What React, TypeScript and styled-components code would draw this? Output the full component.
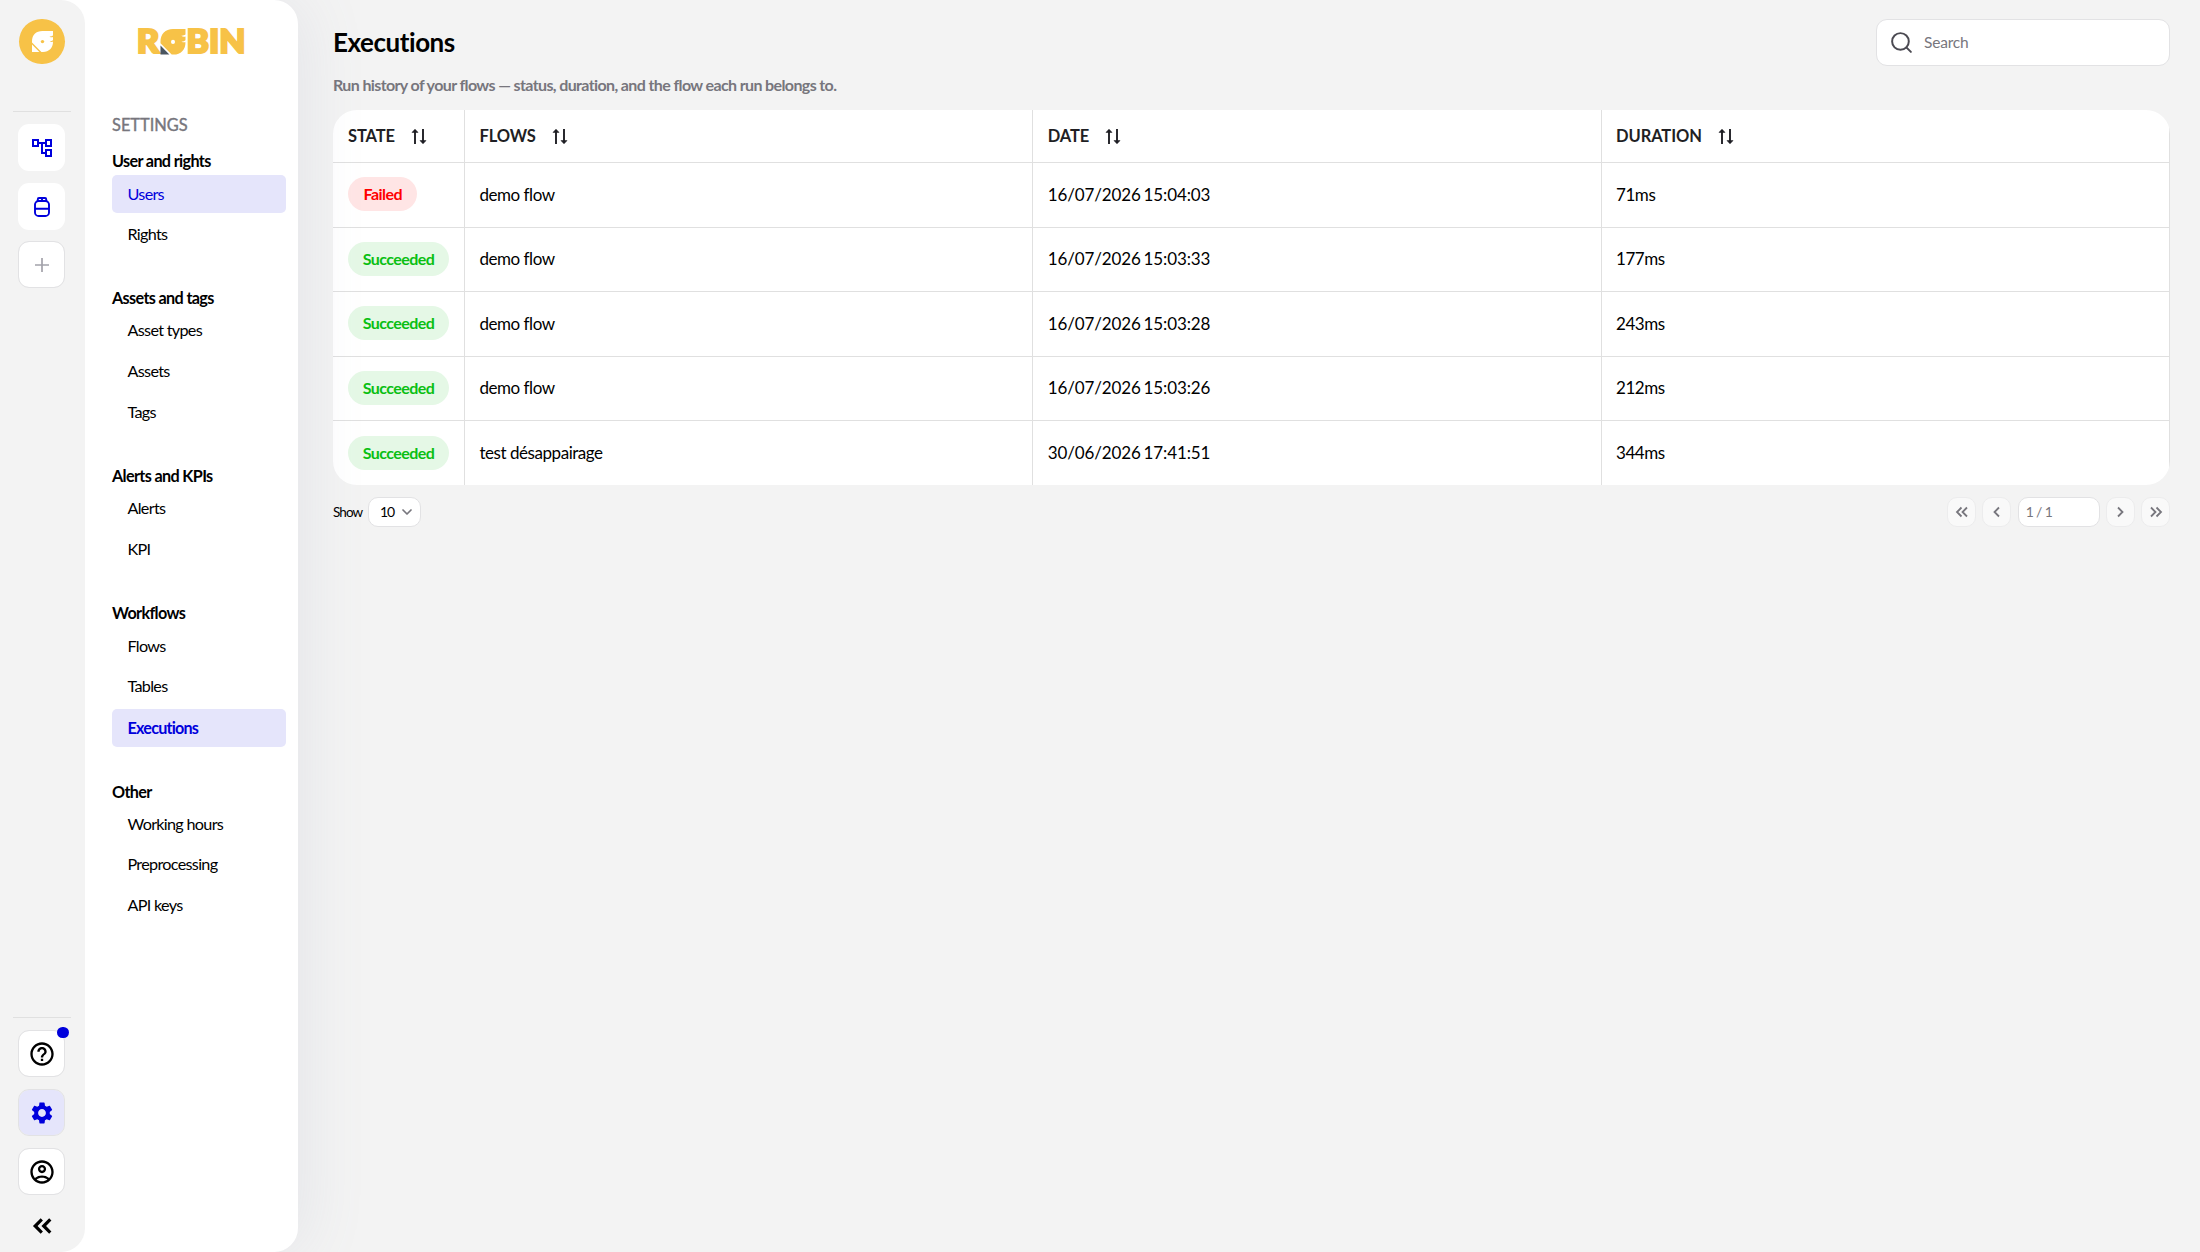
import * as React from 'react';
import styled, { createGlobalStyle } from 'styled-components';
import {
  MdOutlineAccountTree,
  MdHelpOutline,
  MdSettings,
  MdOutlineAccountCircle,
} from 'react-icons/md';
import { Search, ChevronDown } from 'lucide-react';

const GlobalStyle = createGlobalStyle`
  * {
    box-sizing: border-box;
  }
  body {
    margin: 0;
    background: #f3f3f3;
    color: #000;
    font-family: Lato, "Liberation Sans", sans-serif;
  }
  button, input {
    font-family: inherit;
  }
`;

const Page = styled.div`
  display: flex;
  height: 1252px;
  overflow: hidden;
`;

const SideArea = styled.div`
  display: flex;
  flex: 0 0 298px;
  background: #fff;
  border-radius: 0 24px 24px 0;
  box-shadow: 6px 0 64px rgba(120, 132, 165, 0.12);
  z-index: 2;
`;

const Rail = styled.div`
  display: flex;
  flex-direction: column;
  align-items: center;
  flex: 0 0 85px;
  padding: 19px 2px 18px 0;
  background: #f3f3f3;
  border-radius: 0 24px 24px 0;
`;

const Avatar = styled.div`
  display: flex;
  align-items: center;
  justify-content: center;
  flex: 0 0 45px;
  width: 46px;
  margin-left: 1px;
  border-radius: 23px;
  background: #f7c247;
`;

const RailDivider = styled.div`
  flex: 0 0 1px;
  width: 58px;
  margin-left: 1px;
  background: #e0e0e0;
`;

const RailGroup = styled.div`
  display: flex;
  flex-direction: column;
  gap: 12px;
  margin-top: 12px;
`;

const RailButton = styled.button<{ $active?: boolean; $outlined?: boolean; $color?: string }>`
  position: relative;
  display: flex;
  align-items: center;
  justify-content: center;
  width: 47px;
  height: 47px;
  padding: 0;
  border: 1px solid ${p => (p.$outlined ? '#e2e2e4' : 'transparent')};
  border-radius: 11px;
  background: ${p => (p.$active ? '#e5e5fb' : '#fff')};
  background-clip: ${p => (p.$outlined ? 'padding-box' : 'border-box')};
  color: ${p => p.$color || '#000'};
`;

const Dot = styled.span`
  position: absolute;
  top: -4px;
  right: -5px;
  width: 12px;
  height: 11px;
  border-radius: 6px;
  background: #0000dc;
`;

const Spacer = styled.div`
  flex-grow: 1;
`;

const CollapseButton = styled.button`
  display: flex;
  margin-top: 23px;
  padding: 0;
  border: 0;
  background: none;
`;

const Nav = styled.nav`
  display: flex;
  flex-direction: column;
  flex-grow: 1;
  padding: 19px 12px 0 27px;
`;

const Brand = styled.div`
  display: flex;
  padding-left: 22px;
  margin-bottom: 48px;
`;

const NavTitle = styled.div`
  height: 24px;
  line-height: 24px;
  margin-bottom: 11.7px;
  font-size: 16.4px;
  letter-spacing: 0;
  -webkit-text-stroke: 0.4px #77767d;
  color: #77767d;
`;

const NavGroup = styled.div`
  display: flex;
  flex-direction: column;
  margin-bottom: 29.7px;
`;

const NavHeading = styled.div`
  height: 24px;
  line-height: 24px;
  margin-bottom: 2.3px;
  font-size: 16.2px;
  font-weight: 700;
  letter-spacing: -0.65px;
`;

const NavItem = styled.a<{ $highlight?: boolean; $bold?: boolean }>`
  height: 38px;
  line-height: ${p => (p.$highlight ? '38px' : '36px')};
  margin-bottom: 2.7px;
  padding-left: 15.5px;
  border-radius: 5px;
  background: ${p => (p.$highlight ? '#e5e5fb' : 'transparent')};
  color: ${p => (p.$highlight ? '#0000dc' : '#000')};
  font-size: 16.2px;
  font-weight: ${p => (p.$bold ? 700 : 400)};
  letter-spacing: ${p => (p.$bold ? '-0.8px' : '-0.7px')};
`;

const Main = styled.main`
  display: flex;
  flex-direction: column;
  flex-grow: 1;
  padding: 19px 30px 0 35px;
`;

const Header = styled.header`
  display: flex;
  justify-content: space-between;
  height: 47px;
`;

const Title = styled.h1`
  margin: 0;
  line-height: 47px;
  font-size: 26px;
  font-weight: 700;
  letter-spacing: -0.45px;
`;

const SearchBox = styled.label`
  display: flex;
  align-items: center;
  gap: 10px;
  width: 294px;
  padding-left: 12px;
  border: 1px solid #e2e2e4;
  border-radius: 11px;
  background: #fff;
  color: #4b4a52;
`;

const SearchInput = styled.input`
  flex-grow: 1;
  min-width: 0;
  padding: 0 0 2px;
  border: 0;
  outline: 0;
  background: none;
  font-size: 15.5px;
  letter-spacing: -0.2px;
  &::placeholder {
    color: #77767d;
  }
`;

const Subtitle = styled.p`
  height: 24px;
  line-height: 24px;
  margin: 7px 0 13px;
  color: #77767d;
  font-size: 16px;
  font-weight: 700;
  letter-spacing: -0.62px;
`;

const Table = styled.div`
  display: flex;
  flex-direction: column;
  height: 375px;
  border-radius: 24px;
  background: #fff;
  overflow: hidden;
`;

const Row = styled.div<{ $head?: boolean }>`
  display: grid;
  grid-template-columns: 132px 1fr 1fr 1fr;
  height: ${p => (p.$head ? '53px' : '64.5px')};
  flex-shrink: 0;
  border-bottom: 1px solid #e0e0e0;
  &:last-child {
    border-bottom: 0;
  }
`;

const Cell = styled.div`
  display: flex;
  align-items: center;
  padding: 0 0 1px 14.4px;
  border-right: 1px solid #e0e0e0;
  font-size: 17px;
  letter-spacing: -0.45px;
  &:first-child {
    padding-left: 15px;
  }
`;

const HeadCell = styled(Cell)`
  gap: 16px;
  padding-bottom: 0;
  color: #1f1f24;
  font-size: 16.5px;
  font-weight: 700;
  letter-spacing: -0.1px;
`;

const DateCell = styled(Cell)`
  letter-spacing: -0.12px;
  word-spacing: -1.4px;
`;

const Badge = styled.span<{ $failed?: boolean }>`
  height: 34px;
  line-height: 33px;
  padding: 0 ${p => (p.$failed ? '15.5px' : '14.7px')};
  border-radius: 17px;
  background: ${p => (p.$failed ? '#ffe5e5' : '#e5f8e6')};
  color: ${p => (p.$failed ? '#ff0000' : '#0abf12')};
  font-size: 16px;
  font-weight: 700;
  letter-spacing: -0.55px;
`;

const Footer = styled.footer`
  display: flex;
  align-items: center;
  gap: 6.2px;
  height: 30px;
  margin-top: 12px;
  font-size: 13.5px;
  letter-spacing: -0.9px;
`;

const PageSize = styled.button`
  display: flex;
  align-items: center;
  justify-content: space-between;
  width: 53px;
  height: 30px;
  margin-left: -0.5px;
  padding: 0 5px 1px 11px;
  border: 1px solid #e2e2e4;
  border-radius: 10px;
  background: #fff;
  color: #000;
  font-size: 14px;
  letter-spacing: -1.2px;
`;

const PageButton = styled.button`
  display: flex;
  align-items: center;
  justify-content: center;
  width: 29px;
  height: 30px;
  padding: 0;
  border: 1px solid #ececed;
  border-radius: 10px;
  background: #f9f9f9;
`;

const PageInput = styled.input`
  width: 82px;
  height: 30px;
  padding: 0 7px 2px;
  border: 1px solid #e2e2e4;
  border-radius: 10px;
  background: #fff;
  color: #77767d;
  font-size: 14px;
  letter-spacing: -0.9px;
  word-spacing: 0.5px;
`;

const navigation = [
  { heading: 'User and rights', items: ['Users', 'Rights'] },
  { heading: 'Assets and tags', items: ['Asset types', 'Assets', 'Tags'] },
  { heading: 'Alerts and KPIs', items: ['Alerts', 'KPI'] },
  { heading: 'Workflows', items: ['Flows', 'Tables', 'Executions'] },
  { heading: 'Other', items: ['Working hours', 'Preprocessing', 'API keys'] },
];

const executions = [
  { state: 'Failed', flow: 'demo flow', date: '16/07/2026 15:04:03', duration: '71ms' },
  { state: 'Succeeded', flow: 'demo flow', date: '16/07/2026 15:03:33', duration: '177ms' },
  { state: 'Succeeded', flow: 'demo flow', date: '16/07/2026 15:03:28', duration: '243ms' },
  { state: 'Succeeded', flow: 'demo flow', date: '16/07/2026 15:03:26', duration: '212ms' },
  { state: 'Succeeded', flow: 'test désappairage', date: '30/06/2026 17:41:51', duration: '344ms' },
];

const Bird = ({ body, beak, eye }: { body: string; beak: string; eye: string }) => (
  <g>
    <path
      fill={body}
      d="M21 0V4.6C20 5.4 18.6 5.6 17.4 5.5C18.6 6.4 19.9 6.5 21 6.1V9.2C20.1 10 18.8 10.3 17.6 10.2C18.6 11 19.8 11.1 21 10.8C21 17 17 21 11 21H9.4L0 11.6V10.5C0 4 4 0 10.5 0Z"
    />
    <path fill={beak} d="M0 13.6L7.4 21H0Z" />
    <circle cx="10.5" cy="10.6" r="1.7" fill={eye} />
  </g>
);

const Logo = () => (
  <svg width="116" height="46" viewBox="-4 -8 116 46" fontFamily="Lato" fontWeight="900" fontSize="32.4" fill="#f7c247">
    <g stroke="#f7c247" strokeWidth="2.2">
      <text x="-1.2" y="26.4" textLength="22.6" lengthAdjust="spacingAndGlyphs">R</text>
      <text x="48.6" y="26.4" textLength="59" lengthAdjust="spacingAndGlyphs">BIN</text>
    </g>
    <g transform="translate(22.5 2) scale(1.19 1.22)">
      <Bird body="#f7c247" beak="#4a5560" eye="#fff" />
    </g>
  </svg>
);

const JarIcon = () => (
  <svg width="18" height="22" viewBox="0 0 18 22" fill="none" stroke="currentColor" strokeWidth="1.9">
    <rect x="2" y="5" width="14" height="15" rx="3.6" />
    <path d="M4.8 5V3.2Q4.8 2 6 2H12Q13.2 2 13.2 3.2V5M9 2V4.5M2 12.8H16" />
  </svg>
);

const PlusIcon = () => (
  <svg width="14" height="14" viewBox="0 0 14 14" stroke="#a3a2aa" strokeWidth="1.7">
    <path d="M7 0V14M0 7H14" />
  </svg>
);

const CollapseIcon = () => (
  <svg width="20" height="16" viewBox="0 0 20 16" fill="none" stroke="#000" strokeWidth="3.2">
    <path d="M9.8 1.4L3.2 8L9.8 14.6M18.3 1.4L11.7 8L18.3 14.6" />
  </svg>
);

const SortIcon = () => (
  <svg width="16" height="17" viewBox="0 0 16 17" fill="#1f1f24" stroke="#1f1f24">
    <path d="M4 16V2M12 1V15" strokeWidth="1.9" />
    <path d="M1 4.4L4 1.2L7 4.4ZM9 12.6L12 15.8L15 12.6Z" strokeWidth="0.6" />
  </svg>
);

const PagerIcon = ({ d }: { d: string }) => (
  <svg width="14" height="12" viewBox="0 0 14 12" fill="none" stroke="#77767d" strokeWidth="1.8">
    <path d={d} />
  </svg>
);

const SideRail = () => (
  <Rail>
    <Avatar>
      <svg width="21" height="21" viewBox="0 0 21 21">
        <Bird body="#fff" beak="#fff" eye="#f7c247" />
      </svg>
    </Avatar>
    <RailDivider style={{ marginTop: 47 }} />
    <RailGroup>
      <RailButton $color="#0000dc"><MdOutlineAccountTree size={24} /></RailButton>
      <RailButton $color="#0000dc"><JarIcon /></RailButton>
      <RailButton $outlined style={{ marginTop: -1 }}><PlusIcon /></RailButton>
    </RailGroup>
    <Spacer />
    <RailDivider />
    <RailGroup>
      <RailButton $outlined>
        <MdHelpOutline size={28} />
        <Dot />
      </RailButton>
      <RailButton $outlined $active $color="#0000dc"><MdSettings size={26} /></RailButton>
      <RailButton $outlined><MdOutlineAccountCircle size={28} /></RailButton>
    </RailGroup>
    <CollapseButton><CollapseIcon /></CollapseButton>
  </Rail>
);

const SettingsNav = () => (
  <Nav>
    <Brand><Logo /></Brand>
    <NavTitle>SETTINGS</NavTitle>
    {navigation.map(group => (
      <NavGroup key={group.heading}>
        <NavHeading>{group.heading}</NavHeading>
        {group.items.map(item => (
          <NavItem
            key={item}
            $highlight={item === 'Users' || item === 'Executions'}
            $bold={item === 'Executions'}
          >
            {item}
          </NavItem>
        ))}
      </NavGroup>
    ))}
  </Nav>
);

const ExecutionsTable = () => (
  <Table>
    <Row $head>
      {['STATE', 'FLOWS', 'DATE', 'DURATION'].map(label => (
        <HeadCell key={label}>{label}<SortIcon /></HeadCell>
      ))}
    </Row>
    {executions.map(run => (
      <Row key={run.date}>
        <Cell><Badge $failed={run.state === 'Failed'}>{run.state}</Badge></Cell>
        <Cell>{run.flow}</Cell>
        <DateCell>{run.date}</DateCell>
        <Cell>{run.duration}</Cell>
      </Row>
    ))}
  </Table>
);

export default class App extends React.Component {
  render() {
    return (
      <Page>
        <GlobalStyle />
        <SideArea>
          <SideRail />
          <SettingsNav />
        </SideArea>
        <Main>
          <Header>
            <Title>Executions</Title>
            <SearchBox>
              <Search size={25} strokeWidth={1.9} />
              <SearchInput placeholder="Search" />
            </SearchBox>
          </Header>
          <Subtitle>Run history of your flows — status, duration, and the flow each run belongs to.</Subtitle>
          <ExecutionsTable />
          <Footer>
            <span>Show</span>
            <PageSize>10 <ChevronDown size={16} strokeWidth={2.6} color="#77767d" /></PageSize>
            <Spacer />
            <PageButton><PagerIcon d="M6.5 1.5L2 6L6.5 10.5M12 1.5L7.5 6L12 10.5" /></PageButton>
            <PageButton><PagerIcon d="M9 1.5L4.5 6L9 10.5" /></PageButton>
            <PageInput defaultValue="1 / 1" />
            <PageButton><PagerIcon d="M5 1.5L9.5 6L5 10.5" /></PageButton>
            <PageButton><PagerIcon d="M2 1.5L6.5 6L2 10.5M7.5 1.5L12 6L7.5 10.5" /></PageButton>
          </Footer>
        </Main>
      </Page>
    );
  }
}
